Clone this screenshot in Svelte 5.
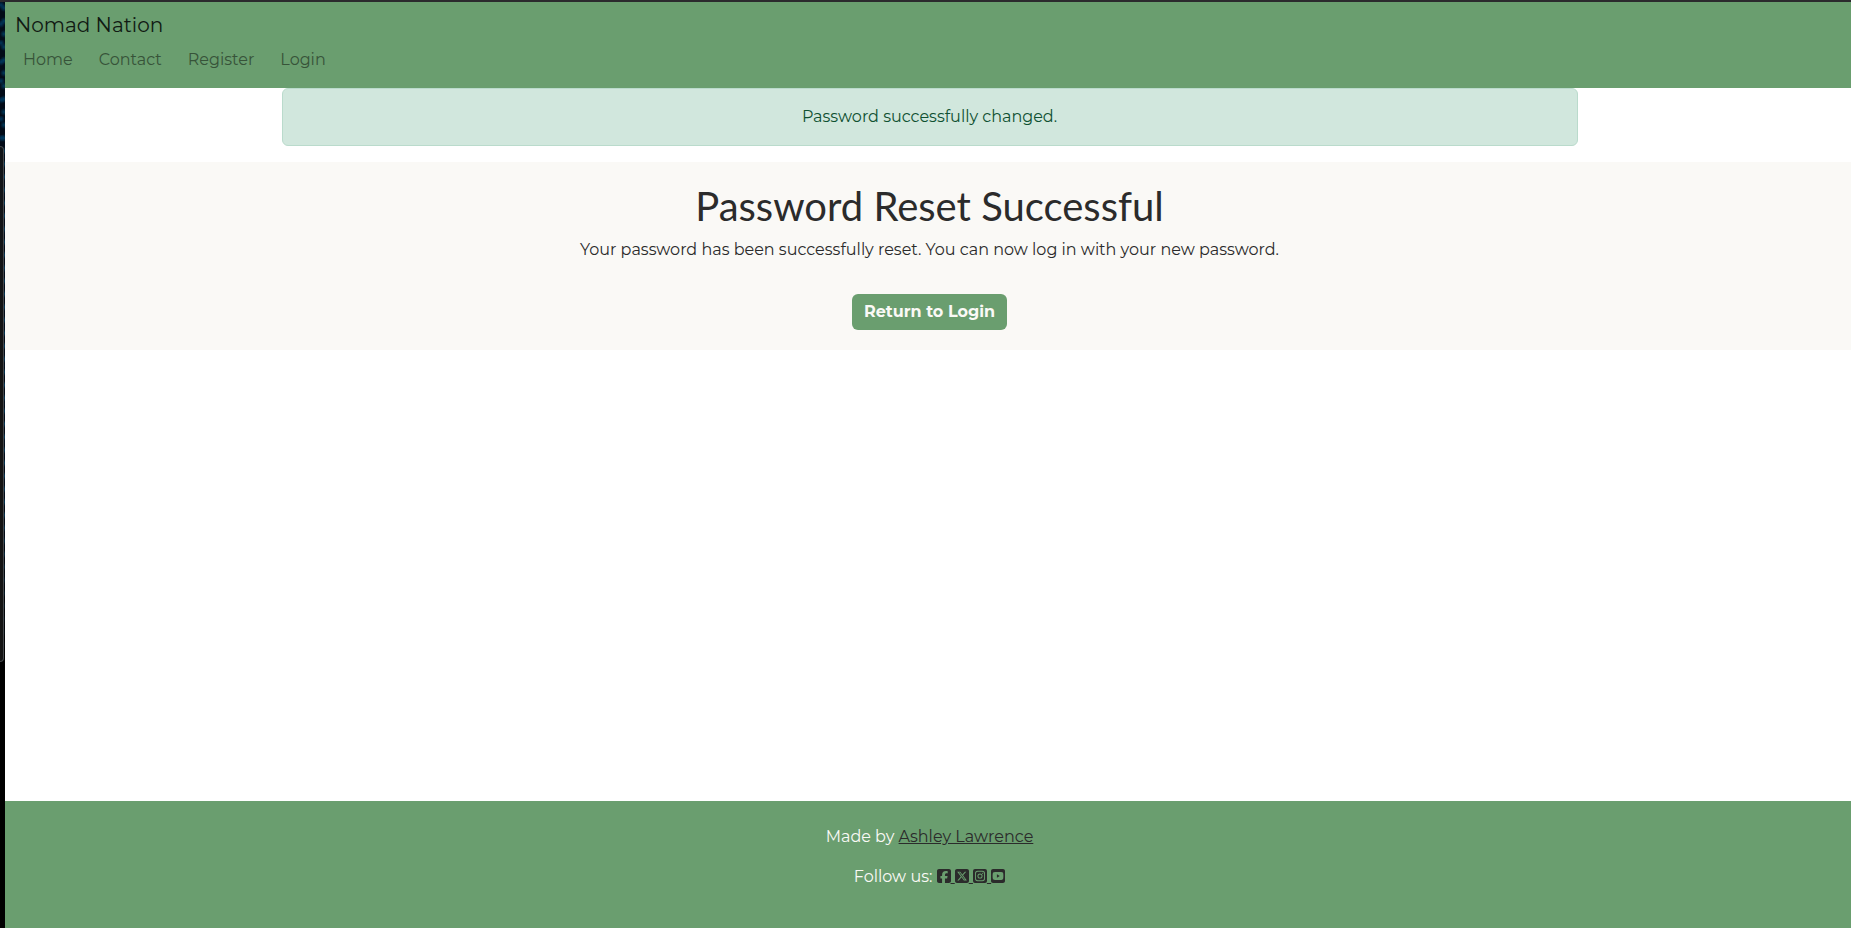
<script>
  const links = ['Home', 'Contact', 'Register', 'Login'];
  const socials = [
    {
      name: 'Facebook',
      d: 'M64 32C28.700 32 0 60.700 0 96V416c0 35.300 28.700 64 64 64h98.200V334.200H109.400V256h52.800V222.300c0-87.100 39.400-127.500 125-127.500c16.200 0 44.200 3.200 55.700 6.400V172c-6-.6-16.500-1-29.600-1c-42 0-58.200 15.900-58.200 57.200V256h83.600l-14.400 78.200H255V480H384c35.300 0 64-28.700 64-64V96c0-35.300-28.700-64-64-64H64z'
    },
    {
      name: 'X',
      d: 'M64 32C28.700 32 0 60.700 0 96V416c0 35.300 28.700 64 64 64H384c35.300 0 64-28.700 64-64V96c0-35.300-28.700-64-64-64H64zm297.100 84L257.300 234.600 379.400 396H283.800L209 298.100 123.300 396H75.800l111-126.900L69.700 116h98l67.700 89.500L313.600 116h47.500zM323.300 367.600L153.400 142.900H125.100L296.900 367.600h26.300z'
    },
    {
      name: 'Instagram',
      d: 'M64 32H384a64 64 0 0 1 64 64V416a64 64 0 0 1-64 64H64a64 64 0 0 1-64-64V96A64 64 0 0 1 64 32zM150 90A86 86 0 0 0 64 176V336a86 86 0 0 0 86 86H298a86 86 0 0 0 86-86V176A86 86 0 0 0 298 90zM150 122H298a56 56 0 0 1 56 56V334a56 56 0 0 1-56 56H150a56 56 0 0 1-56-56V178a56 56 0 0 1 56-56zM224 174a82 82 0 1 0 0 164a82 82 0 1 0 0-164zM224 204a52 52 0 1 1 0 104a52 52 0 1 1 0-104zM310 151a19 19 0 1 0 0 38a19 19 0 1 0 0-38z'
    },
    {
      name: 'YouTube',
      d: 'M64 32C28.700 32 0 60.700 0 96V416c0 35.300 28.700 64 64 64H384c35.300 0 64-28.700 64-64V96c0-35.300-28.700-64-64-64H64zM224 128C224 128 331 128 358 136C373 140 384 151 389 166C396 193 396 256 396 256S396 314 388 346C384 361 373 372 358 376C331 384 224 384 224 384S117 384 90 376C75 372 64 361 60 346C52 314 52 256 52 256S52 193 59 166C64 151 75 140 90 136C117 128 224 128 224 128zM189 202V309L282 256z'
    }
  ];
</script>

<div class="desktop">
  <div class="backdrop" aria-hidden="true"><div class="panel"></div></div>
  <div class="page">
    <header>
      <a class="brand" href="#home">Nomad Nation</a>
      <nav>
        {#each links as link}<a href="#{link.toLowerCase()}">{link}</a>{/each}
      </nav>
    </header>
    <div class="container"><div class="alert" role="alert">Password successfully changed.</div></div>
    <main>
      <h1>Password Reset Successful</h1>
      <p>Your password has been successfully reset. You can now log in with your new password.</p>
      <a class="button" href="#login">Return to Login</a>
    </main>
    <footer>
      <p>Made by <a href="#author">Ashley Lawrence</a></p>
      <p>
        Follow us:
        {#each socials as s}<a href="#{s.name.toLowerCase()}" aria-label={s.name}><svg viewBox="0 0 448 512" aria-hidden="true"><path fill-rule="evenodd" d={s.d} /></svg>{' '}</a>{/each}
      </p>
    </footer>
  </div>
</div>

<style>
  :global(body) {
    margin: 0;
  }
  .desktop {
    box-sizing: border-box;
    display: flex;
    min-height: 100vh;
    overflow: hidden;
    border-top: 2px solid #2b2a2d;
    background: #fff;
    color: #2b2b2b;
    font: 16px/24px Montserrat, Inter, sans-serif;
  }
  .backdrop {
    box-sizing: border-box;
    flex: 0 0 5px;
    padding-top: 144px;
    background:
      linear-gradient(transparent 500px, #000 660px),
      radial-gradient(circle at 1px 3px, #004a7daa, transparent 4px) 0 0 / 5px 19px,
      radial-gradient(circle at 4px 6px, #00659988, transparent 4px) 0 0 / 5px 13px,
      #020b18;
  }
  .panel {
    box-sizing: border-box;
    width: 4px;
    height: 516px;
    border: 1px solid #45484b;
    border-left: 0;
    border-radius: 0 4px 4px 0;
    background: linear-gradient(#111519, #141414 240px);
  }
  .page {
    display: flex;
    flex: 1;
    flex-direction: column;
    min-width: 0;
    margin-right: -3px;
  }
  header {
    display: flex;
    flex-direction: column;
    align-items: flex-start;
    padding: 8px 10px 16px;
    background: #6a9e6f;
  }
  .brand {
    color: #111a13;
    font-size: 20px;
    line-height: 30px;
    text-decoration: none;
  }
  nav {
    display: flex;
    gap: 26px;
    padding: 8px 8px 0;
  }
  nav a {
    color: #375339;
    text-decoration: none;
  }
  .container {
    box-sizing: border-box;
    width: 100%;
    max-width: 1320px;
    margin: 0 auto 16px;
    padding: 0 12px;
  }
  .alert {
    padding: 16px;
    border: 1px solid #badbcc;
    border-radius: 6px;
    background: #d1e7dd;
    color: #0f5132;
    text-align: center;
  }
  main {
    padding: 20px 16px;
    background: #faf9f6;
    text-align: center;
  }
  h1 {
    margin: 0 0 8px;
    font: 400 40px/48px Lato, sans-serif;
  }
  p {
    margin: 0 0 16px;
  }
  main p {
    margin-bottom: 32px;
  }
  .button {
    display: inline-block;
    padding: 6px 12px;
    border-radius: 6px;
    background: #6a9e6f;
    color: #faf9f6;
    font-weight: 700;
    text-decoration: none;
  }
  footer {
    margin-top: auto;
    padding: 24px 16px 23px;
    background: #6a9e6f;
    color: #faf9f6;
    text-align: center;
  }
  footer a {
    color: #2b2b2b;
  }
  svg {
    width: 14px;
    height: 16px;
    vertical-align: -2px;
    fill: currentColor;
  }
</style>
